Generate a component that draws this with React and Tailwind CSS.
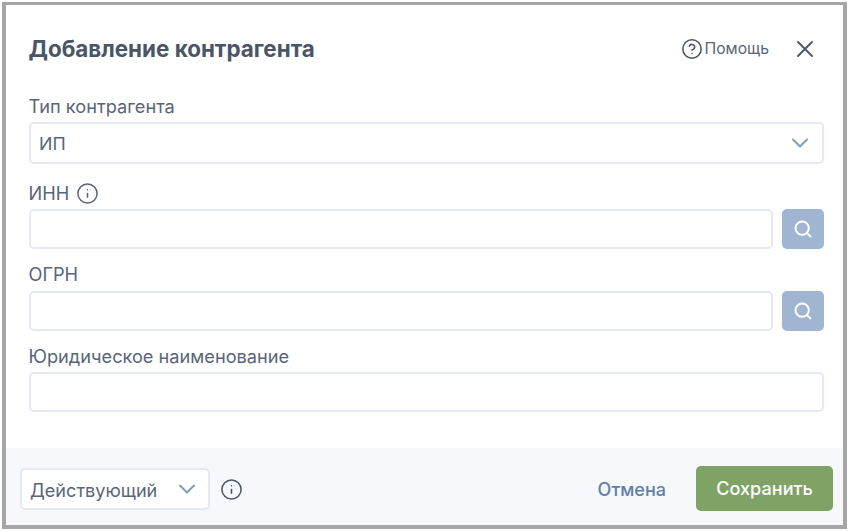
import { ChevronDown, CircleHelp, Info, Search, X } from "lucide-react";

const labelClass = "-ml-[0.5px] text-[18.2px] leading-[24px] text-[#596579]";
const inputClass =
  "h-[40px] min-w-0 flex-1 rounded-[5px] border-2 border-[#e4e9f3] bg-white";

const SearchField = () => (
  <div className="flex gap-[9px]">
    <div className={inputClass} />
    <button className="flex h-[40px] w-[42px] items-center justify-center rounded-[5px] bg-[#9fb5d2]">
      <Search size={20} strokeWidth={2.4} className="text-white" />
    </button>
  </div>
);

const App = () => {
  return (
    <div className="h-[531px] w-[849px] bg-white pt-[2px] pr-[2px] pb-[2px] pl-[2px] font-['Inter',sans-serif]">
      <div className="flex h-[527px] w-[845px] flex-col border-x-4 border-t-[3px] border-b-4 border-[#a6a6a6] bg-white">
        <div className="flex-1 pr-[19px] pl-[23px]">
          {/* header */}
          <div className="flex h-[76px] items-center justify-between pt-[12px]">
            <h1 className="-ml-[0.5px] text-[22.4px] font-bold text-[#4a5568]">Добавление контрагента</h1>
            <div className="flex items-center">
              <CircleHelp size={22} strokeWidth={1.7} className="text-[#4a5568]" />
              <span className="ml-[2px] text-[15.7px] text-[#596579]">Помощь</span>
              <X size={28} strokeWidth={1.7} className="ml-[22px] mr-[5px] text-[#4f5a6c]" />
            </div>
          </div>

          {/* fields */}
          <div className="mt-[13px] h-[24px]">
            <span className={labelClass}>Тип контрагента</span>
          </div>
          <div className="mt-[4px] flex h-[42px] items-center justify-between rounded-[5px] border-2 border-[#e4e9f3] pr-[8px] pl-[8px]">
            <span className="pt-[2px] text-[17.8px] text-[#596579]">ИП</span>
            <ChevronDown size={28} strokeWidth={1.7} className="text-[#7f9cc0]" />
          </div>

          <div className="mt-[17px] flex h-[24px] items-center gap-[8px]">
            <span className={labelClass}>ИНН</span>
            <Info size={23} strokeWidth={1.6} className="-ml-px text-[#596579]" />
          </div>
          <div className="mt-[4px]">
            <SearchField />
          </div>

          <div className="mt-[13px] h-[24px]">
            <span className={labelClass}>ОГРН</span>
          </div>
          <div className="mt-[5px]">
            <SearchField />
          </div>

          <div className="mt-[13px] h-[24px]">
            <span className={labelClass}>Юридическое наименование</span>
          </div>
          <div className="mt-[4px] flex">
            <div className={inputClass} />
          </div>
        </div>

        {/* footer */}
        <div className="flex h-[77px] items-center justify-between bg-[#f6f8fb] pt-[5px] pr-[10px] pl-[14px]">
          <div className="flex items-center">
            <div className="flex h-[42px] w-[190px] items-center justify-between rounded-[5px] border-2 border-[#e4e9f3] bg-white pr-[7px] pl-[8px]">
              <span className="pt-[3px] text-[18.1px] text-[#596579]">Действующий</span>
              <ChevronDown size={28} strokeWidth={1.7} className="text-[#7f9cc0]" />
            </div>
            <Info size={23} strokeWidth={1.6} className="ml-[10px] text-[#4a5568]" />
          </div>
          <div className="flex items-center">
            <button className="text-[18px] font-medium text-[#5f7fad]">Отмена</button>
            <button className="-mt-px ml-[30px] h-[45px] w-[137px] rounded-[5px] bg-[#7ea364] text-[18.1px] font-medium text-white">
              Сохранить
            </button>
          </div>
        </div>
      </div>
    </div>
  );
};

export default App;
